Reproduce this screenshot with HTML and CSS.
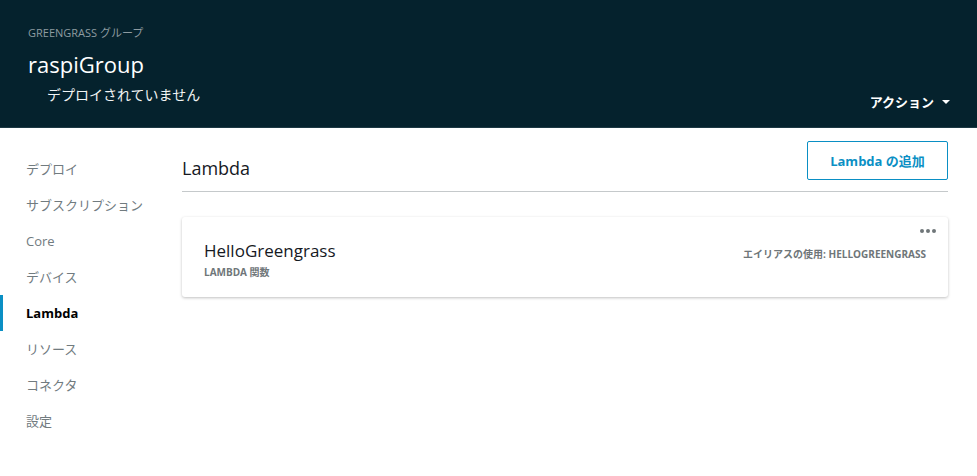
FILE: index.html
```html
<!DOCTYPE html>
<html lang="ja">
<head>
    <meta charset="UTF-8">
    <title>raspiGroup</title>
    <link rel="stylesheet" href="styles.css">
</head>
<body>
<header class="group-header">
    <div class="group-info">
        <div class="group-label">GREENGRASS グループ</div>
        <h1 class="group-name">raspiGroup</h1>
        <div class="group-status">デプロイされていません</div>
    </div>
    <button class="actions-button">アクション <span class="caret"></span></button>
</header>

<div class="layout">
    <nav class="side-nav">
        <a href="#">デプロイ</a>
        <a href="#">サブスクリプション</a>
        <a href="#">Core</a>
        <a href="#">デバイス</a>
        <a href="#" class="active">Lambda</a>
        <a href="#">リソース</a>
        <a href="#">コネクタ</a>
        <a href="#">設定</a>
    </nav>

    <main class="content">
        <div class="section-header">
            <h2>Lambda</h2>
            <button class="add-button">Lambda の追加</button>
        </div>

        <div class="lambda-card">
            <div class="card-main">
                <div class="lambda-name">HelloGreengrass</div>
                <div class="lambda-type">LAMBDA 関数</div>
            </div>
            <div class="card-side">
                <span class="more-dots"><i></i><i></i><i></i></span>
                <div class="alias">エイリアスの使用: HELLOGREENGRASS</div>
            </div>
        </div>
    </main>
</div>
</body>
</html>
```

FILE: styles.css
```css
/* Global */
body {
    margin: 0;
    font-family: 'Open Sans', 'Noto Sans CJK JP', sans-serif;
    background-color: #fff;
    color: #16191f;
}

/* Header */
.group-header {
    background-color: #05222d;
    height: 128px;
    box-sizing: border-box;
    padding: 26px 27px 0 28px;
    display: flex;
    justify-content: space-between;
    align-items: flex-start;
    border-bottom: 1px solid #1d3944;
}

.group-label {
    font-size: 11px;
    line-height: 14px;
    color: #8d9ba0;
}

.group-name {
    margin: 9px 0 0;
    font-size: 22px;
    font-weight: normal;
    line-height: 30px;
    color: #fff;
}

.group-status {
    margin: 6px 0 0 19px;
    font-size: 14px;
    line-height: 20px;
    color: #f2f4f4;
}

.actions-button {
    margin-top: 66px;
    background: none;
    border: none;
    padding: 0;
    color: #fff;
    font-family: inherit;
    font-size: 13px;
    font-weight: bold;
    line-height: 20px;
    cursor: pointer;
    display: flex;
    align-items: center;
    gap: 8px;
}

.caret {
    width: 0;
    height: 0;
    border-left: 4px solid transparent;
    border-right: 4px solid transparent;
    border-top: 4px solid #fff;
}

/* Layout */
.layout {
    display: flex;
}

.side-nav {
    width: 182px;
    flex-shrink: 0;
    padding-top: 23px;
    display: flex;
    flex-direction: column;
}

.side-nav a {
    display: block;
    height: 36px;
    line-height: 36px;
    padding-left: 26px;
    font-size: 13px;
    color: #717b7f;
    text-decoration: none;
    border-left: 0 solid transparent;
}

.side-nav a.active {
    color: #000;
    font-weight: bold;
    box-shadow: inset 3px 0 0 #0a8fc4;
}

/* Content */
.content {
    flex: 1;
    padding: 13px 29px 0 0;
}

.section-header {
    display: flex;
    justify-content: space-between;
    align-items: flex-end;
    padding-bottom: 11px;
    border-bottom: 1px solid #c5c9cb;
}

.section-header h2 {
    margin: 0;
    font-size: 18px;
    font-weight: normal;
    line-height: 24px;
    color: #16191f;
}

.add-button {
    height: 39px;
    padding: 0 20px;
    background: #fff;
    border: 1px solid #0a8fc4;
    border-radius: 2px;
    color: #0a8fc4;
    font-family: inherit;
    font-size: 13px;
    font-weight: bold;
    width: 141px;
    cursor: pointer;
}

.lambda-card {
    margin-top: 25px;
    height: 80px;
    box-sizing: border-box;
    background: #fff;
    border-radius: 3px;
    box-shadow: 0 1px 3px rgba(0, 0, 0, 0.25);
    display: flex;
    justify-content: space-between;
    padding: 0 22px 0 22px;
}

.card-main {
    padding-top: 22px;
}

.lambda-name {
    font-size: 17px;
    line-height: 24px;
    color: #16191f;
}

.lambda-type {
    margin-top: 1px;
    font-size: 10px;
    font-weight: bold;
    color: #6f7679;
}

.card-side {
    display: flex;
    flex-direction: column;
    align-items: flex-end;
    padding-top: 12px;
}

.more-dots {
    display: flex;
    gap: 2px;
    margin-right: -10px;
}

.more-dots i {
    width: 4px;
    height: 4px;
    border-radius: 50%;
    background: #6f7679;
}

.alias {
    margin-top: 13px;
    font-size: 10px;
    font-weight: bold;
    color: #6f7679;
}
```
